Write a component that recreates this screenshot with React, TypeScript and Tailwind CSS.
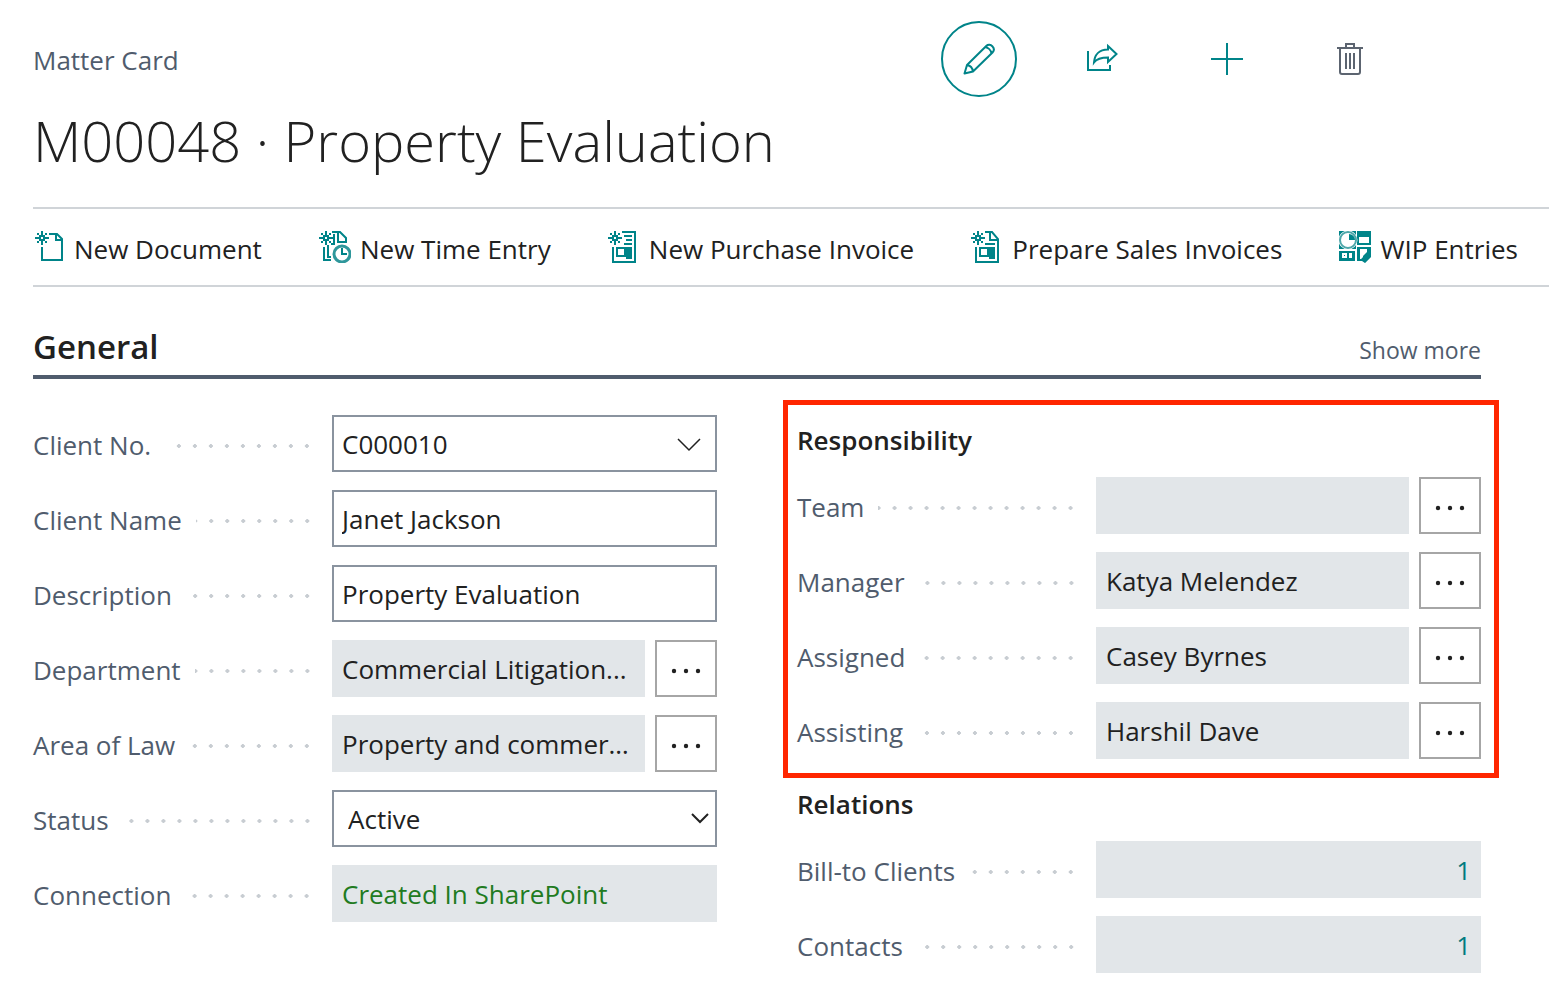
import React, { useState } from 'react';

const STAR = 'M6 0h2v4h-2z M6 10h2v4h-2z M0 6h4v2h-4z M10 6h4v2h-4z M4 4h6v6h-6z M2 2h2v2h-2z M10 2h2v2h-2z M2 10h2v2h-2z M10 10h2v2h-2z M6 6v2h2v-2z';

const Icon: React.FC<{ children: React.ReactNode }> = ({ children }) => (
  <svg className="w-8 h-8 shrink-0" viewBox="0 0 32 32" fill="none" aria-hidden="true">
    {children}
  </svg>
);

const NewDocumentIcon = () => (
  <Icon>
    <path d={STAR} transform="translate(2 0)" fill="#008489" />
    <path d="M16 3h8l5 5v21H9V16M23 3v6h6" stroke="#008489" strokeWidth="2" />
  </Icon>
);

const TimeEntryIcon = () => (
  <Icon>
    <path d={STAR} fill="#008489" />
    <path d="M13 1h8l6 6v5M19 2v9h8M15 3v10h-3M5 16v13h7M9 14v12h3" stroke="#008489" strokeWidth="2" />
    <circle cx="23" cy="23" r="8" fill="#fff" stroke="#2f979b" strokeWidth="3" />
    <path d="M23 17v6h5" stroke="#008489" strokeWidth="2" />
  </Icon>
);

const PurchaseInvoiceIcon = () => (
  <Icon>
    <path d={STAR} fill="#008489" />
    <path d="M14 1h13v30H5V16M16 5h8M18 9h6M16 13h8" stroke="#008489" strokeWidth="2" />
    <path d="M8 16h16v12h-6v-2h-10z M10 18v6h6v-6z" fill="#008489" fillRule="evenodd" />
  </Icon>
);

const SalesInvoiceIcon = () => (
  <Icon>
    <path d={STAR} fill="#008489" />
    <path d="M14 1h7l6 7v23H5V16M19 1v8h8M14 13h10" stroke="#008489" strokeWidth="2" />
    <path d="M8 16h16v12h-6v-2h-10z M10 18v6h6v-6z" fill="#008489" fillRule="evenodd" />
  </Icon>
);

const WipIcon = () => (
  <Icon>
    <path d="M0 0h17v18H0z M18 0h14v14H18z M0 20h16v10H0z M18 16h14v10l-6 6-3-2h-5z" fill="#008489" />
    <circle cx="9" cy="9" r="8" fill="#fff" stroke="#fff" strokeWidth="3" />
    <circle cx="9" cy="9" r="8" fill="#fff" stroke="#4da6a9" strokeWidth="2" />
    <path d="M10 3v6h6a6 6 0 0 0-6-6z" fill="#008489" />
    <path d="M20 6h10v6H20z M3 22h5v5H3z M10 22h3v5h-3z M21 18h7v3l-4 4v3h-3z" fill="#fff" />
    <path d="M5 24h1v1H5z" fill="#008489" />
    <path d="M23 27l3 3 6-6" stroke="#008489" strokeWidth="2" />
  </Icon>
);

const actions = [
  { label: 'New Document', icon: <NewDocumentIcon /> },
  { label: 'New Time Entry', icon: <TimeEntryIcon /> },
  { label: 'New Purchase Invoice', icon: <PurchaseInvoiceIcon /> },
  { label: 'Prepare Sales Invoices', icon: <SalesInvoiceIcon /> },
  { label: 'WIP Entries', icon: <WipIcon /> },
];

interface FieldRowProps {
  id: string;
  label: string;
  children: React.ReactNode;
}

const FieldRow: React.FC<FieldRowProps> = ({ id, label, children }) => (
  <div className="flex h-[57px]">
    <div className="w-[299px] shrink-0 flex items-center pt-1 pr-[17px]">
      <label htmlFor={id} className="pb-0.5 text-[#505c6d] whitespace-nowrap">{label}</label>
      <span className="flex-1 h-4 ml-3.5 bg-[radial-gradient(circle,#c8cdd2_2px,transparent_2px)] bg-[size:16px_16px] bg-right bg-repeat-x" />
    </div>
    <div className="flex-1 min-w-0 flex gap-[10px]">{children}</div>
  </div>
);

const TextField: React.FC<{ id: string; label: string; value: string }> = ({ id, label, value }) => (
  <FieldRow id={id} label={label}>
    <input id={id} defaultValue={value} className="w-full border-2 border-[#8a939f] px-2 bg-white" />
  </FieldRow>
);

const LookupField: React.FC<{ id: string; label: string; value: string }> = ({ id, label, value }) => (
  <FieldRow id={id} label={label}>
    <input id={id} readOnly defaultValue={value} className="flex-1 min-w-0 px-[10px] bg-[#e2e6e9] text-ellipsis" />
    <button aria-label={`Look up ${label}`} className="w-[62px] shrink-0 border-2 border-[#a6a6a6] flex items-center justify-center">
      <svg className="w-8 h-2 mt-1" viewBox="0 0 32 8" fill="#212121">
        <circle cx="4" cy="4" r="2.2" />
        <circle cx="16" cy="4" r="2.2" />
        <circle cx="28" cy="4" r="2.2" />
      </svg>
    </button>
  </FieldRow>
);

const CountField: React.FC<{ id: string; label: string; value: number }> = ({ id, label, value }) => (
  <FieldRow id={id} label={label}>
    <button id={id} className="w-full px-[10px] bg-[#e2e6e9] text-right text-[#007a7f]">{value}</button>
  </FieldRow>
);

const App: React.FC = () => {
  const [status, setStatus] = useState('Active');

  return (
    <main className="bg-white pl-[33px] pb-[22px] font-['Open_Sans','Noto_Sans',sans-serif] text-[26px] leading-9 text-[#212121]">
      <header className="pt-[21px] pr-40">
        <div className="flex items-center justify-between">
          <span className="pt-0.5 text-[#505c6d]">Matter Card</span>
          <div className="flex gap-12">
            <button aria-label="Edit" className="w-[76px] h-[76px] rounded-full border-2 border-[#008489] flex items-center justify-center">
              <Icon>
                <path d="M1.5 30.5L4 22 23.5 2.8C27-.5 33.500 5 29.500 9.500L10 28.500z M4 22c3 .5 5.500 3 6 6.500 M22 4c3 .5 6 3 6.500 6.500" stroke="#008489" strokeWidth="2" strokeLinejoin="round" />
              </Icon>
            </button>
            <button aria-label="Share" className="w-[76px] h-[76px] flex items-center justify-center">
              <Icon>
                <path d="M1 8v19h22v-5" stroke="#008489" strokeWidth="2" />
                <path d="M21 3l8.500 8L21 19v-4.500C15 14.500 10 15.500 7 19.500 7.500 12 12 6.500 21 6.500z" stroke="#008489" strokeWidth="2" />
              </Icon>
            </button>
            <button aria-label="New" className="w-[76px] h-[76px] flex items-center justify-center">
              <Icon>
                <path d="M16 0v32M0 16h32" stroke="#008489" strokeWidth="2" />
              </Icon>
            </button>
            <button aria-label="Delete" className="w-[76px] h-[76px] flex items-center justify-center">
              <Icon>
                <path d="M2 5h26M11 5V1h8v4M5 5v24q0 2 2 2h16q2 0 2-2V5M11 10v16M15 10v16M19 10v16" stroke="#5c6470" strokeWidth="2" />
              </Icon>
            </button>
          </div>
        </div>
        <h1 className="text-[56px] leading-[86px] font-light">M00048 · Property Evaluation</h1>
      </header>

      <nav className="mt-6 h-20 border-y-2 border-[#d0d4d8] pr-[31px] flex items-center justify-between">
        {actions.map(action => (
          <button key={action.label} className="flex items-center gap-[9px] whitespace-nowrap">
            {action.icon}
            <span className="pt-1">{action.label}</span>
          </button>
        ))}
      </nav>

      <section className="pr-[68px]">
        <div className="mt-9 h-14 border-b-4 border-[#505c6d] flex items-baseline justify-between">
          <h2 className="text-[33px] leading-[48px] font-semibold">General</h2>
          <button className="text-[23px] text-[#505c6d]">Show more</button>
        </div>

        <div className="mt-[21px] grid grid-cols-2 gap-20">
          <div className="pt-[15px] flex flex-col gap-[18px]">
            <FieldRow id="client-no" label="Client No.">
              <div className="relative w-full">
                <input id="client-no" defaultValue="C000010" className="w-full h-full border-2 border-[#8a939f] pl-2 pr-14" />
                <button aria-label="Choose client" className="absolute inset-y-0 right-4">
                  <svg className="w-6 h-4" viewBox="0 0 24 16" fill="none">
                    <path d="M1 3l11 11L23 3" stroke="#212121" strokeWidth="1.500" />
                  </svg>
                </button>
              </div>
            </FieldRow>
            <TextField id="client-name" label="Client Name" value="Janet Jackson" />
            <TextField id="description" label="Description" value="Property Evaluation" />
            <LookupField id="department" label="Department" value="Commercial Litigation..." />
            <LookupField id="area" label="Area of Law" value="Property and commercial" />
            <FieldRow id="status" label="Status">
              <div className="relative w-full">
                <select
                  id="status"
                  value={status}
                  onChange={(e) => setStatus(e.target.value)}
                  className="appearance-none w-full h-full border-2 border-[#8a939f] bg-white pl-[14px]"
                >
                  <option>Active</option>
                </select>
                <svg className="absolute right-2 top-[23px] w-[18px] h-3 pointer-events-none" viewBox="0 0 18 12" fill="none">
                  <path d="M1 1l8 8 8-8" stroke="#212121" strokeWidth="2" />
                </svg>
              </div>
            </FieldRow>
            <FieldRow id="connection" label="Connection">
              <input id="connection" readOnly defaultValue="Created In SharePoint" className="w-full px-[10px] bg-[#e2e6e9] text-[#217b21]" />
            </FieldRow>
          </div>

          <div>
            <div className="-ml-[14px] -mr-[18px] border-[5px] border-[#ff2600] pl-[9px] pr-[13px] pb-[14px]">
              <h3 className="h-[72px] pb-0.5 flex items-center font-semibold">Responsibility</h3>
              <div className="flex flex-col gap-[18px]">
                <LookupField id="team" label="Team" value="" />
                <LookupField id="manager" label="Manager" value="Katya Melendez" />
                <LookupField id="assigned" label="Assigned" value="Casey Byrnes" />
                <LookupField id="assisting" label="Assisting" value="Harshil Dave" />
              </div>
            </div>
            <h3 className="h-[63px] pb-3 flex items-center font-semibold">Relations</h3>
            <div className="flex flex-col gap-[18px]">
              <CountField id="bill-to" label="Bill-to Clients" value={1} />
              <CountField id="contacts" label="Contacts" value={1} />
            </div>
          </div>
        </div>
      </section>
    </main>
  );
};

export default App;
